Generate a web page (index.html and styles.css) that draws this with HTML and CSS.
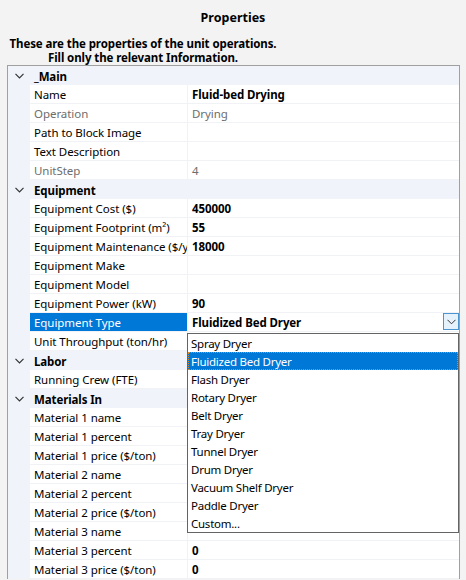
FILE: index.html
```html
<!DOCTYPE html>
<html>
<head>
<meta charset="utf-8">
<link rel="stylesheet" href="styles.css">
</head>
<body>
<div class="page">
  <div class="title">Properties</div>
  <div class="desc">These are the properties of the unit operations.<br>Fill only the relevant Information.</div>
  <div class="grid">
    <div class="cat"><span class="tw"><svg width="9" height="6" viewBox="0 0 9 6"><polyline points="0.5,0.8 4.5,4.8 8.5,0.8" fill="none" stroke="#333" stroke-width="1.2"/></svg></span><span class="catname">_Main</span></div>
    <div class="row"><span class="g"></span><span class="n">Name</span><span class="v">Fluid-bed Drying</span></div>
    <div class="row ro"><span class="g"></span><span class="n">Operation</span><span class="v">Drying</span></div>
    <div class="row"><span class="g"></span><span class="n">Path to Block Image</span><span class="v"></span></div>
    <div class="row"><span class="g"></span><span class="n">Text Description</span><span class="v"></span></div>
    <div class="row ro"><span class="g"></span><span class="n">UnitStep</span><span class="v">4</span></div>
    <div class="cat"><span class="tw"><svg width="9" height="6" viewBox="0 0 9 6"><polyline points="0.5,0.8 4.5,4.8 8.5,0.8" fill="none" stroke="#333" stroke-width="1.2"/></svg></span><span class="catname">Equipment</span></div>
    <div class="row"><span class="g"></span><span class="n">Equipment Cost ($)</span><span class="v">450000</span></div>
    <div class="row"><span class="g"></span><span class="n">Equipment Footprint (m²)</span><span class="v">55</span></div>
    <div class="row"><span class="g"></span><span class="n">Equipment Maintenance ($/yr)</span><span class="v">18000</span></div>
    <div class="row"><span class="g"></span><span class="n">Equipment Make</span><span class="v"></span></div>
    <div class="row"><span class="g"></span><span class="n">Equipment Model</span><span class="v"></span></div>
    <div class="row"><span class="g"></span><span class="n">Equipment Power (kW)</span><span class="v">90</span></div>
    <div class="row sel"><span class="g"></span><span class="n">Equipment Type</span><span class="v edit">Fluidized Bed Dryer<span class="ddbtn"><svg width="9" height="6" viewBox="0 0 9 6"><polyline points="0.5,0.8 4.5,4.8 8.5,0.8" fill="none" stroke="#333" stroke-width="1"/></svg></span></span></div>
    <div class="row"><span class="g"></span><span class="n">Unit Throughput (ton/hr)</span><span class="v"></span></div>
    <div class="cat"><span class="tw"><svg width="9" height="6" viewBox="0 0 9 6"><polyline points="0.5,0.8 4.5,4.8 8.5,0.8" fill="none" stroke="#333" stroke-width="1.2"/></svg></span><span class="catname">Labor</span></div>
    <div class="row"><span class="g"></span><span class="n">Running Crew (FTE)</span><span class="v"></span></div>
    <div class="cat"><span class="tw"><svg width="9" height="6" viewBox="0 0 9 6"><polyline points="0.5,0.8 4.5,4.8 8.5,0.8" fill="none" stroke="#333" stroke-width="1.2"/></svg></span><span class="catname">Materials In</span></div>
    <div class="row"><span class="g"></span><span class="n">Material 1 name</span><span class="v"></span></div>
    <div class="row"><span class="g"></span><span class="n">Material 1 percent</span><span class="v"></span></div>
    <div class="row"><span class="g"></span><span class="n">Material 1 price ($/ton)</span><span class="v"></span></div>
    <div class="row"><span class="g"></span><span class="n">Material 2 name</span><span class="v"></span></div>
    <div class="row"><span class="g"></span><span class="n">Material 2 percent</span><span class="v"></span></div>
    <div class="row"><span class="g"></span><span class="n">Material 2 price ($/ton)</span><span class="v"></span></div>
    <div class="row"><span class="g"></span><span class="n">Material 3 name</span><span class="v"></span></div>
    <div class="row"><span class="g"></span><span class="n">Material 3 percent</span><span class="v">0</span></div>
    <div class="row"><span class="g"></span><span class="n">Material 3 price ($/ton)</span><span class="v">0</span></div>

    <ul class="dropdown">
      <li>Spray Dryer</li>
      <li class="on">Fluidized Bed Dryer</li>
      <li>Flash Dryer</li>
      <li>Rotary Dryer</li>
      <li>Belt Dryer</li>
      <li>Tray Dryer</li>
      <li>Tunnel Dryer</li>
      <li>Drum Dryer</li>
      <li>Vacuum Shelf Dryer</li>
      <li>Paddle Dryer</li>
      <li>Custom...</li>
    </ul>
  </div>
</div>
</body>
</html>
```

FILE: styles.css
```css
html, body {
  margin: 0;
  padding: 0;
  background: #f3f3f3;
  font-family: "Noto Sans", "Open Sans", sans-serif;
  font-size: 11.5px;
  letter-spacing: -0.25px;
  color: #000;
  overflow: hidden;
}
.page {
  width: 466px;
  height: 580px;
}
.title {
  height: 19px;
  padding-top: 8px;
  text-align: center;
  font-weight: bold;
  font-size: 12.5px;
  letter-spacing: 0;
  line-height: 19px;
}
.desc {
  width: 286px;
  margin-top: 9px;
  text-align: center;
  font-weight: bold;
  letter-spacing: -0.1px;
  line-height: 14px;
  padding-top: 1px;
  height: 28px;
}
.grid {
  position: relative;
  margin-left: 7px;
  width: 451px;
  border: 1px solid #a0a0a0;
  border-bottom: none;
  background: #fff;
}
.cat {
  display: flex;
  align-items: center;
  height: 19px;
  background: #f0f4fa;
  font-weight: bold;
  letter-spacing: -0.1px;
}
.tw {
  width: 22px;
  display: flex;
  justify-content: center;
  padding-left: 1px;
  box-sizing: border-box;
}
.catname {
  padding-left: 4px;
  line-height: 19px;
  padding-top: 1px;
}
.row {
  display: grid;
  grid-template-columns: 22px 158px 1fr;
  height: 19px;
}
.row .g {
  background: #f0f4fa;
}
.row .n, .row .v {
  display: block;
  border-bottom: 1px solid #f0f2f6;
  box-sizing: border-box;
  height: 19px;
  line-height: 20px;
  padding-left: 4px;
  white-space: nowrap;
  overflow: hidden;
}
.row .n {
  border-right: 1px solid #f0f2f6;
  letter-spacing: -0.05px;
}
.row .v {
  font-weight: bold;
  letter-spacing: -0.1px;
}
.row.ro .n, .row.ro .v {
  color: #6d6d6d;
  font-weight: normal;
  letter-spacing: -0.05px;
}
.row.sel .n {
  background: #0078d7;
  color: #fff;
}
.v.edit {
  position: relative;
}
.ddbtn {
  position: absolute;
  right: 0px;
  top: 0px;
  width: 16px;
  height: 17px;
  box-sizing: border-box;
  border: 1px solid #4c94d0;
  background: #e5f1fb;
  display: flex;
  align-items: center;
  justify-content: center;
}
.dropdown {
  position: absolute;
  left: 179px;
  top: 267px;
  width: 272px;
  margin: 0;
  padding: 0;
  list-style: none;
  border: 1px solid #646464;
  box-sizing: border-box;
  background: #fff;
  font-weight: normal;
}
.dropdown li {
  height: 18px;
  line-height: 19px;
  padding-left: 3px;
  box-sizing: border-box;
}
.dropdown li.on {
  background: #0078d7;
  color: #fff;
  outline: 1px dotted #e8871e;
  outline-offset: -1px;
}
```
